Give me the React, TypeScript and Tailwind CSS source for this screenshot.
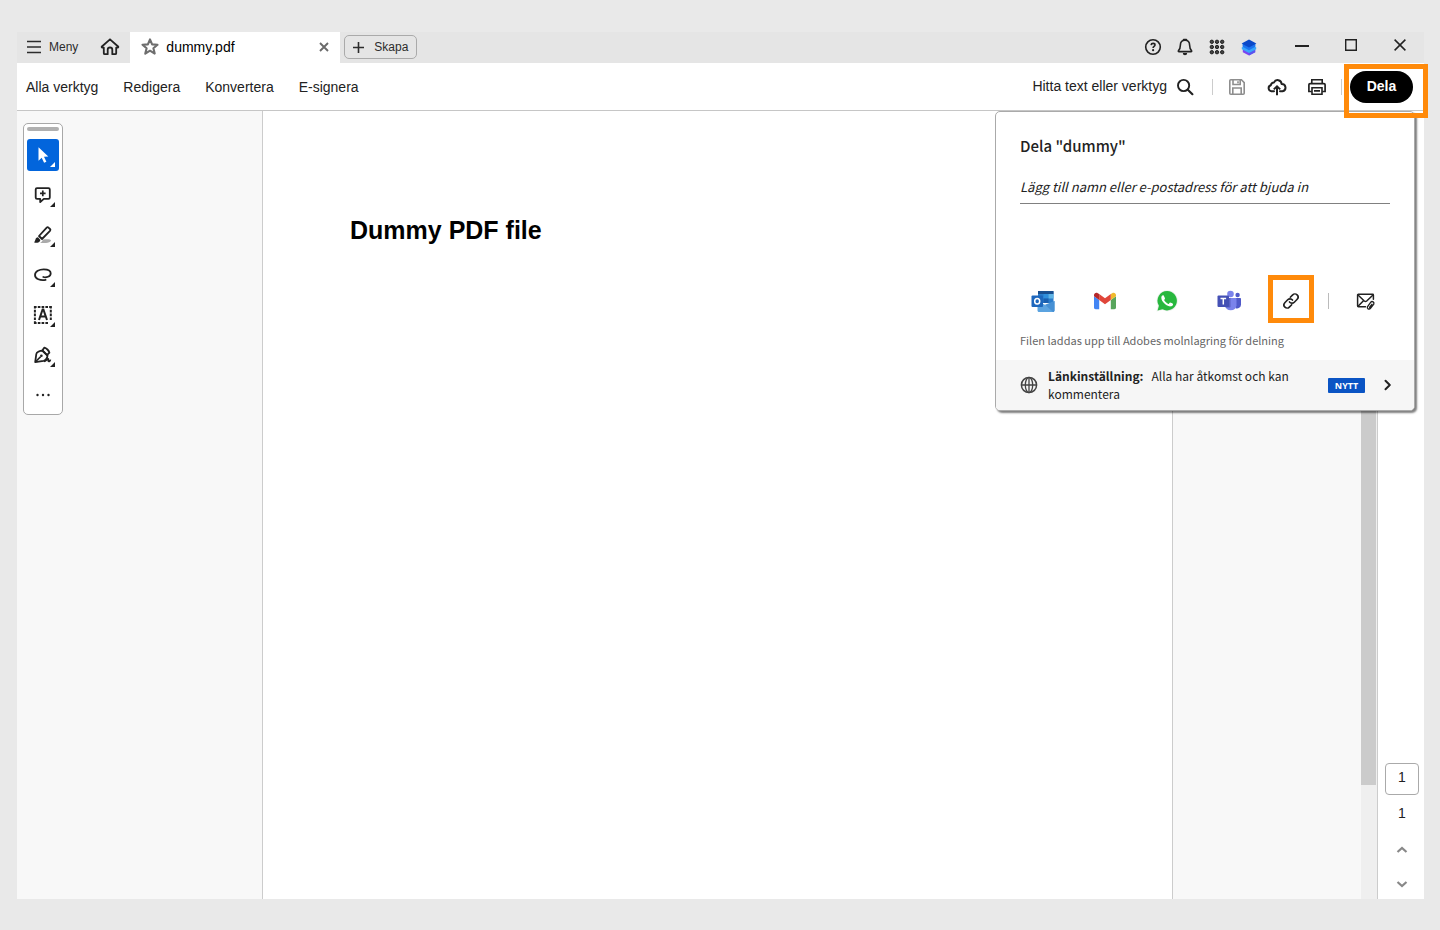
import type { ReactNode } from "react";

const ui = "font-['Liberation_Sans',sans-serif]";
const clean = "font-['Noto_Sans_CJK_SC',sans-serif]";

type IconProps = { w?: number; h?: number; box: string; children: ReactNode };

function Icon({ w = 20, h = 20, box, children }: IconProps) {
  return (
    <svg width={w} height={h} viewBox={box} fill="none" stroke="currentColor" aria-hidden="true" className="shrink-0">
      {children}
    </svg>
  );
}

function IconButton({ label, className, children }: { label: string; className: string; children: ReactNode }) {
  return (
    <button type="button" aria-label={label} className={`flex shrink-0 items-center justify-center ${className}`}>
      {children}
    </button>
  );
}

const HomeIcon = () => (
  <Icon box="0 0 20 20">
    <path d="M10 2.3 1.9 9.5c-.5.5-.2 1.1.4 1.1h1.5v5.6c0 .6.4 1 1 1h2.9v-4.4a2.3 2.3 0 0 1 4.6 0v4.4h2.9c.6 0 1-.4 1-1v-5.6h1.5c.6 0 .9-.6.4-1.1z" strokeWidth="1.8" strokeLinejoin="round" />
  </Icon>
);

const StarIcon = () => (
  <Icon box="0 0 20 20">
    <path d="m10 2.400 2.100 5 5.400.4-4.100 3.500 1.300 5.300-4.700-2.900-4.700 2.900 1.300-5.300-4.100-3.500 5.400-.4z" strokeWidth="2.100" strokeLinejoin="round" />
  </Icon>
);

const HelpIcon = () => (
  <Icon box="0 0 20 20">
    <circle cx="10" cy="10" r="7.3" strokeWidth="1.6" />
    <path d="M8.1 8.1c.1-1.1.9-1.7 2-1.7s1.9.6 1.9 1.6c0 1.400-1.900 1.400-1.900 3" strokeWidth="1.6" />
    <circle cx="10.1" cy="13.2" r="1.1" fill="currentColor" stroke="none" />
  </Icon>
);

const BellIcon = () => (
  <Icon box="0 0 20 20">
    <path d="M10 3.2c-3 0-4.6 2.2-4.6 4.9 0 3.4-.9 4.6-2 5.7-.3.3-.1.8.3.8h12.6c.4 0 .6-.5.3-.8-1.1-1.1-2-2.3-2-5.7 0-2.700-1.600-4.900-4.600-4.900z" strokeWidth="1.6" strokeLinejoin="round" />
    <path d="M8.700 2.600h2.600" strokeWidth="1.800" strokeLinecap="round" />
    <path d="M7.800 16h4.400a2.200 2.200 0 0 1-4.400 0z" fill="currentColor" stroke="none" />
  </Icon>
);

const GridIcon = () => (
  <Icon w={16} h={16} box="0 0 16 16">
    {[2.8, 8, 13.2].map((y) =>
      [2.8, 8, 13.2].map((x) => <circle key={`${x}-${y}`} cx={x} cy={y} r="1.7" fill="#444" stroke="currentColor" strokeWidth="1" />)
    )}
  </Icon>
);

const LayersLogo = () => (
  <svg width="16" height="18" viewBox="0 0 16 18" aria-hidden="true">
    <path d="m1.800 12 6.200-2 6.200 2v2.200L8 17.600l-6.200-3.400z" fill="#7a45f0" />
    <path d="M8 11h6.200v3.200L8 17.600z" fill="#5a55ee" />
    <path d="m.8 9.300 7.200-2 7.200 2v2L8 15 .8 11.300z" fill="#38a6fb" />
    <path d="m1.600 6 12.800-.2v2.900L8 12.300 1.600 8.700z" fill="#1b74f0" />
    <path d="M8 1.500 15.400 5.500 8 9.500.6 5.500z" fill="#0b49c9" />
  </svg>
);

const SearchIcon = () => (
  <Icon box="0 0 20 20">
    <circle cx="8.600" cy="8.500" r="5.600" strokeWidth="1.900" />
    <path d="m12.800 12.800 4.600 4.400" strokeWidth="2.200" strokeLinecap="round" />
  </Icon>
);

const SaveIcon = () => (
  <Icon box="0 0 20 20">
    <path d="M3.800 2.800h10.600l2.800 2.800v10.600c0 .6-.4 1-1 1H3.800c-.6 0-1-.4-1-1V3.800c0-.6.4-1 1-1z" strokeWidth="1.600" />
    <path d="M6 3v4.500h7.200V3M5.800 17v-6h8.400v6M11 4.200v2" strokeWidth="1.600" />
  </Icon>
);

const CloudIcon = () => (
  <Icon box="0 0 20 20">
    <path d="M7 14.200H4.500a3 3 0 0 1-.6-5.900 3 3 0 0 1 3.100-2.900 4 4 0 0 1 7.600 1.500 3.700 3.700 0 0 1 1 7.300H13" strokeWidth="2" strokeLinecap="round" strokeLinejoin="round" />
    <path d="M10 18.300V9.800M6.800 12.400 10 9.300l3.200 3.100" strokeWidth="2" />
  </Icon>
);

const PrintIcon = () => (
  <Icon box="0 0 20 20">
    <path d="M4.800 6V2.800h10.400V6" strokeWidth="1.600" />
    <path d="M4.800 14.500H1.900V7.800c0-.8.400-1.200 1.200-1.200h13.800c.8 0 1.200.4 1.200 1.200v6.700h-2.900" strokeWidth="1.700" />
    <path d="M5 10.700h10v6.500H5zM7 13.900h6" strokeWidth="1.600" />
  </Icon>
);

const Corner = ({ white }: { white?: boolean }) => <path d="M28 23v5h-5z" fill={white ? "#fff" : "#222"} stroke="none" />;

const toolButtons = [
  {
    label: "Markera",
    active: true,
    art: <path d="M11.500 8.200v13.600l3.200-3 2.400 5 2.300-1.100-2.400-4.900 4.300-.4z" fill="#fff" stroke="none" />,
  },
  {
    label: "Lägg till kommentar",
    art: (
      <>
        <path d="M10 9.200h11.500c.8 0 1.300.5 1.300 1.300v8c0 .8-.5 1.300-1.300 1.300h-4.700l-3.600 3.300v-3.300H10c-.8 0-1.300-.5-1.300-1.300v-8c0-.8.500-1.300 1.300-1.300z" strokeWidth="1.800" strokeLinejoin="round" />
        <path d="M15.800 11.600v5.600M13 14.400h5.600" strokeWidth="1.700" />
      </>
    ),
  },
  {
    label: "Markeringspenna",
    art: (
      <>
        <path d="M12.500 24c3-.2 2-3.200 5-3.700 2.500-.3 6.800-.2 6.500 1.200-.2 1.300-3 2.500-5 2.500z" fill="#aaa" stroke="none" />
        <path d="m12 17 7.700-8.400c.5-.5 1.300-.5 1.800 0l1.500 1.400c.5.500.5 1.300 0 1.800L15 20z" strokeWidth="1.800" strokeLinejoin="round" />
        <path d="M11 18.200c-1.400 0-2.400 1.200-2.600 2.600l-1.200 2.800c2.200.6 5.900 0 6.200-2.600z" fill="currentColor" stroke="none" />
      </>
    ),
  },
  {
    label: "Rita frihand",
    art: <path d="M16.300 18c2.500.9 7.400-.2 7.400-3.800 0-2.800-3.400-3.900-7-3.900-4.300 0-8.700 2-8.700 5.700 0 4 5.300 5.800 10.600 4.900" strokeWidth="1.800" strokeLinecap="round" />,
  },
  {
    label: "Lägg till text",
    art: (
      <>
        <path d="M7 8h17.500M7 24h14.500" strokeWidth="2" strokeDasharray="2.600 1.200" />
        <path d="M7.900 7v18M23.800 7v15" strokeWidth="2" strokeDasharray="2.600 1.200" />
        <path d="m12 21 3.600-10.500h.8L20 21M13.300 17.500h5.400" strokeWidth="2" />
      </>
    ),
  },
  {
    label: "Signera",
    art: (
      <>
        <path d="M8.200 23.200 9.300 15c.2-1.400 3-3.400 6.400-3.400l4.800 4.700c.2 3-2.500 5.200-3.900 5.500z" strokeWidth="1.800" strokeLinejoin="round" />
        <path d="m15.200 11.500 2.200-2.900c1.800.4 4.600 3 5 5l-2.500 2.500z" strokeWidth="1.800" strokeLinejoin="round" />
        <path d="m8.500 22.800 5.200-5.200" strokeWidth="1.500" />
        <circle cx="14.400" cy="16.800" r="1.300" fill="currentColor" stroke="none" />
        <path d="M17 22.500c2.200-.3 2.800-2.700 4-2.700s-.5 2.600.7 2.600 1-1.300 2.300-1" strokeWidth="1.700" />
      </>
    ),
  },
];

const OutlookIcon = () => (
  <svg width="24" height="22" viewBox="0 0 24 22" aria-hidden="true">
    <path d="M7 2c0-.6.400-1 1-1h13.500c.6 0 1 .4 1 1v11H7z" fill="#2a7ccb" />
    <path d="M7 1h15.500v3H7z" fill="#1a4f8f" />
    <path d="M12.500 4h5v4.500h-5z" fill="#2f8fdc" />
    <path d="M17.500 4h5v4.500h-5z" fill="#5fb4e6" />
    <path d="M12.500 8.500h5V13h-5z" fill="#1a5fae" />
    <path d="m6.500 11 2 1.200 7 3.300 8-4.500v9.500c0 .8-.6 1.500-1.500 1.500H8c-.9 0-1.500-.7-1.500-1.500z" fill="#5ba3e0" />
    <path d="M14 14.700 23.500 11v9.500c0 .8-.6 1.500-1.500 1.500z" fill="#4690d4" />
    <rect x="0.500" y="5.500" width="11.500" height="11.500" rx="1" fill="#1d67bd" />
    <ellipse cx="6.200" cy="11.200" rx="2.500" ry="2.800" fill="none" stroke="#fff" strokeWidth="1.500" />
  </svg>
);

const GmailIcon = () => (
  <svg width="24" height="18" viewBox="0 0 24 18" aria-hidden="true">
    <path d="M1 4.200 6.200 8v9.200H2.600c-.9 0-1.600-.7-1.600-1.600z" fill="#4285f4" />
    <path d="M17.800 8 23 4.200v11.400c0 .9-.7 1.600-1.600 1.600h-3.600z" fill="#58a55c" />
    <path d="M17.800 2v6L23 4.200V3.100c0-2-2.200-3.100-3.800-1.900z" fill="#f0b92d" />
    <path d="M6.200 8V2L12 6.300 17.800 2v6L12 12.300z" fill="#e0463a" />
    <path d="M1 3.100v1.100L6.200 8V2l-1.400-.8C3.200 0 1 1.100 1 3.100z" fill="#b5282a" />
  </svg>
);

const WhatsAppIcon = () => (
  <svg width="24" height="24" viewBox="0 0 24 24" aria-hidden="true">
    <path d="M12.200 1.200A10.500 10.500 0 0 0 3 16.800L1.500 22.500l5.900-1.500a10.500 10.500 0 1 0 4.800-19.800z" fill="#e9efea" />
    <path d="M12.200 2A9.700 9.700 0 0 0 3.900 16.700l-1.300 4.700 4.900-1.200A9.700 9.700 0 1 0 12.200 2z" fill="#28b83e" />
    <path d="M8.700 6.600c-.3-.6-1.500-.4-2 .5-2.200 4 5 11.400 9.500 10.200 1.600-.4 2-1.800 1.800-2.400-.2-.4-2.400-1.500-2.900-1.400-.5.200-1.200 1.400-1.500 1.500-.8 0-3.900-2.400-4.400-4 0-.4.900-1.300.8-1.800z" fill="#fff" />
  </svg>
);

const TeamsIcon = () => (
  <svg width="24" height="22" viewBox="0 0 24 22" aria-hidden="true">
    <circle cx="20.600" cy="5" r="2.200" fill="#5059c9" />
    <circle cx="13.500" cy="4" r="3.300" fill="#7b83eb" />
    <path d="M17 8h6c.5 0 1 .4 1 1v5.500a4 4 0 0 1-5.500 3.700z" fill="#5059c9" />
    <path d="M8.500 8h10c.6 0 1 .4 1 1v6.300a5.800 5.800 0 0 1-11.500 0z" fill="#7b83eb" />
    <path d="M8 8h5.500v8.500c0 .6-.4 1-1 1H8.500z" fill="#5a61c4" />
    <rect x="0.500" y="5.500" width="11.500" height="11.500" rx="1" fill="#4450b5" />
    <path d="M3.500 8.600h5.600M6.300 8.600v6" fill="none" stroke="#fff" strokeWidth="1.500" />
  </svg>
);

const LinkIcon = () => (
  <Icon box="0 0 20 20">
    <path d="m9.300 6.300 2.400-2.400a3.100 3.100 0 0 1 4.500 4.300l-2.900 3a3.200 3.200 0 0 1-4.800-.3M10.700 13.700l-2.400 2.400a3.100 3.100 0 0 1-4.500-4.300l2.900-3a3.200 3.200 0 0 1 4.800.3" strokeWidth="1.600" strokeLinecap="round" />
  </Icon>
);

const MailIcon = () => (
  <Icon box="0 0 20 20">
    <path d="M9.500 15.700H2.300c-.4 0-.7-.3-.7-.7V4c0-.4.3-.7.7-.7h14.400c.4 0 .7.300.7.700v4.200" strokeWidth="1.500" strokeLinecap="round" />
    <path d="m2 4 6.300 6c.8.700 1.600.7 2.400 0L17 4M2 15.300l5.500-5.600" strokeWidth="1.500" />
    <path d="m17.800 13.200-3.300 4.200c-1.400 1.700-4 .1-2.900-1.900l3-4.200c1.500-1.800 4.300 0 3 2.100l-2.900 3.500c-.6.500-1.300 0-1-.7l2.200-2.900" strokeWidth="1.300" strokeLinecap="round" />
  </Icon>
);

const GlobeIcon = () => (
  <Icon w={18} h={18} box="0 0 18 18">
    <circle cx="9" cy="9" r="7.600" strokeWidth="1.500" />
    <ellipse cx="9" cy="9" rx="3.700" ry="7.600" strokeWidth="1.300" />
    <path d="M9 1.400v15.200M1.400 9h15.200" strokeWidth="1.300" />
  </Icon>
);

function TitleBar() {
  return (
    <header className="flex h-[31px] shrink-0 items-stretch bg-[#e5e5e5] text-[#2c2c2c]">
      <button type="button" className="ml-[9px] flex items-center gap-[7px] pb-0.5 text-xs">
        <Icon w={16} h={16} box="0 0 16 16">
          <path d="M1 2.500h14M1 8h14M1 13.500h14" strokeWidth="1.600" />
        </Icon>
        Meny
      </button>
      <IconButton label="Hem" className="ml-3 w-10 pb-0.5 text-[#222]">
        <HomeIcon />
      </IconButton>
      <div className="flex w-[210px] items-center bg-white pb-0.5 pl-2.5">
        <span className="text-[#6e6e6e]">
          <StarIcon />
        </span>
        <span className="ml-1.5 flex-1 text-sm text-black">dummy.pdf</span>
        <IconButton label="Stäng flik" className="w-8 text-[#6a6a6a]">
          <Icon w={10} h={10} box="0 0 10 10">
            <path d="m1 1 8 8M9 1 1 9" strokeWidth="1.900" />
          </Icon>
        </IconButton>
      </div>
      <button type="button" className="ml-1 mt-[3px] flex h-6 w-[73px] items-center gap-2.5 rounded-[5px] border border-[#aaa] pl-2 text-xs">
        <Icon w={11} h={11} box="0 0 11 11">
          <path d="M5.500 0v11M0 5.500h11" strokeWidth="1.600" />
        </Icon>
        Skapa
      </button>
      <div className="ml-auto flex pb-0.5 text-[#222]">
        <IconButton label="Hjälp" className="w-8"><HelpIcon /></IconButton>
        <IconButton label="Aviseringar" className="w-8"><BellIcon /></IconButton>
        <IconButton label="Appar" className="w-8"><GridIcon /></IconButton>
        <IconButton label="Konto" className="w-8"><LayersLogo /></IconButton>
      </div>
      <div className="ml-3 flex pb-1.5 text-[#222]">
        <IconButton label="Minimera" className="w-[49px]">
          <Icon w={14} h={12} box="0 0 14 12"><path d="M0 7h14" strokeWidth="2" /></Icon>
        </IconButton>
        <IconButton label="Maximera" className="w-[49px]">
          <Icon w={12} h={12} box="0 0 12 12"><path d="M.7.7h10.600v10.600H.7z" strokeWidth="1.400" /></Icon>
        </IconButton>
        <IconButton label="Stäng" className="w-[49px]">
          <Icon w={12} h={12} box="0 0 12 12"><path d="m.6.6 10.800 10.800M11.400.6.6 11.400" strokeWidth="1.500" /></Icon>
        </IconButton>
      </div>
    </header>
  );
}

function Toolbar() {
  return (
    <div className="flex h-12 shrink-0 items-center border-b border-[#c6c6c6] bg-white pl-[9px] pr-[11px] text-sm text-[#222]">
      <nav className="flex gap-[25px]">
        {["Alla verktyg", "Redigera", "Konvertera", "E-signera"].map((item) => (
          <a key={item} href="#">{item}</a>
        ))}
      </nav>
      <button type="button" className="ml-auto flex items-center gap-2">
        <span className="pb-0.5">Hitta text eller verktyg</span>
        <SearchIcon />
      </button>
      <span className="ml-[17px] mr-1 h-4 w-px bg-[#ccc]" />
      <IconButton label="Spara" className="h-8 w-10 text-[#8e8e8e]"><SaveIcon /></IconButton>
      <IconButton label="Ladda upp" className="h-8 w-10"><CloudIcon /></IconButton>
      <IconButton label="Skriv ut" className="h-8 w-10"><PrintIcon /></IconButton>
      <span className="ml-1 mr-2 h-4 w-px bg-[#ccc]" />
      <div className="relative">
        <button type="button" className="h-8 w-[63px] rounded-full bg-black pb-0.5 font-bold text-white">Dela</button>
        <span className="pointer-events-none absolute -left-1.5 -right-[15px] -top-[7px] z-20 h-[54px] border-[5px] border-[#ff8a0a]" />
      </div>
    </div>
  );
}

function ToolPalette() {
  return (
    <div role="toolbar" aria-label="Verktyg" className="ml-1.5 mt-3 flex w-10 flex-col items-center gap-2 rounded-[5px] border border-[#a8a8a8] bg-white py-[3px] text-[#222]">
      <span className="h-1 w-8 rounded-sm bg-[#b0b0b0]" />
      {toolButtons.map((tool) => (
        <IconButton key={tool.label} label={tool.label} className={tool.active ? "h-8 w-8 rounded-[3px] bg-[#0265dc]" : "h-8 w-8"}>
          <Icon w={32} h={32} box="0 0 32 32">
            {tool.art}
            <Corner white={tool.active} />
          </Icon>
        </IconButton>
      ))}
      <IconButton label="Fler verktyg" className="h-8 w-8">
        <Icon w={14} h={4} box="0 0 14 4">
          {[1.500, 7, 12.500].map((x) => <circle key={x} cx={x} cy="2" r="1.200" fill="currentColor" stroke="none" />)}
        </Icon>
      </IconButton>
    </div>
  );
}

function SharePanel() {
  return (
    <section aria-label="Dela" className={`absolute right-[9px] top-0 z-10 w-[420px] overflow-hidden rounded-[5px] border border-[#aaa] bg-white text-[#222] shadow-[2px_2px_2px_rgba(0,0,0,0.5)] ${clean}`}>
      <div className="px-6 pt-6">
        <h2 className="text-[15px] font-medium leading-5">Dela "dummy"</h2>
        <input
          type="text"
          aria-label="Lägg till namn eller e-postadress för att bjuda in"
          placeholder="Lägg till namn eller e-postadress för att bjuda in"
          className="mt-3.5 h-[34px] w-full border-b border-[#808080] text-[13px] outline-none placeholder:italic placeholder:text-[#222]"
        />
        <div className="mt-[71px] flex h-12 items-stretch">
          <div className="flex gap-4">
            <IconButton label="Outlook" className="w-[46px] pt-1"><OutlookIcon /></IconButton>
            <IconButton label="Gmail" className="w-[46px] pt-1"><GmailIcon /></IconButton>
            <IconButton label="WhatsApp" className="w-[46px] pt-1"><WhatsAppIcon /></IconButton>
            <IconButton label="Teams" className="w-[46px] pt-1"><TeamsIcon /></IconButton>
            <IconButton label="Kopiera länk" className="w-[46px] border-[5px] border-[#ff8a0a] pt-1"><LinkIcon /></IconButton>
          </div>
          <span className="mx-3.5 mt-[18px] h-4 w-px bg-[#bbb]" />
          <IconButton label="E-post" className="w-[46px] pt-1"><MailIcon /></IconButton>
        </div>
        <p className="pb-3 pt-[9px] text-[11px] leading-4 text-[#666]">Filen laddas upp till Adobes molnlagring för delning</p>
      </div>
      <button type="button" className="flex h-[50px] w-full items-center bg-[#f6f6f6] pl-6 pr-[21px] text-left">
        <span className="text-[#444]"><GlobeIcon /></span>
        <span className="ml-2.5 w-[260px] text-xs leading-[18px]">
          <span className="mr-2 font-bold">Länkinställning:</span>Alla har åtkomst och kan kommentera
        </span>
        <span className="ml-auto h-[15px] w-[37px] rounded-[1px] bg-[#0a54c4] text-center font-['Open_Sans',sans-serif] text-[9px] font-bold leading-[15px] text-white">NYTT</span>
        <span className="ml-[18px]">
          <Icon w={10} h={12} box="0 0 10 12"><path d="m2.500 1.700 4.300 4.300-4.300 4.300" strokeWidth="2" strokeLinecap="round" strokeLinejoin="round" /></Icon>
        </span>
      </button>
    </section>
  );
}

function PageRail() {
  return (
    <aside className="flex w-[47px] shrink-0 flex-col items-center justify-end border-l border-[#ccc] bg-white pl-0.5 text-sm text-[#222]">
      <input aria-label="Sidnummer" defaultValue="1" className="h-8 w-[34px] rounded-[4px] border border-[#aaa] pb-1 text-center outline-none" />
      <span className="mt-2 leading-5">1</span>
      <IconButton label="Föregående sida" className="mt-3 h-[30px] w-8 text-[#888]">
        <Icon w={12} h={8} box="0 0 12 8"><path d="m1.500 6 4.500-4 4.500 4" strokeWidth="2.200" /></Icon>
      </IconButton>
      <IconButton label="Nästa sida" className="mt-1 h-[30px] w-8 text-[#888]">
        <Icon w={12} h={8} box="0 0 12 8"><path d="m1.500 2 4.500 4 4.500-4" strokeWidth="2.200" /></Icon>
      </IconButton>
    </aside>
  );
}

export default function App() {
  return (
    <div className={`flex h-screen flex-col bg-[#e9e9e9] pb-[31px] pl-[17px] pr-4 pt-8 ${ui}`}>
      <TitleBar />
      <Toolbar />
      <main className="relative flex min-h-0 flex-1 bg-[#f8f8f8]">
        <div className="flex-[245]">
          <ToolPalette />
        </div>
        <article className="w-[911px] shrink-0 border-x border-[#ccc] bg-white pl-[87px] pt-[103px]">
          <h1 className="text-[25px] font-bold leading-8 text-black">Dummy PDF file</h1>
        </article>
        <div className="flex-[188]" />
        <div className="w-4 shrink-0 bg-[#efefef]">
          <div className="h-[674px] w-[15px] bg-[#cbcbcb]" />
        </div>
        <PageRail />
        <SharePanel />
      </main>
    </div>
  );
}
